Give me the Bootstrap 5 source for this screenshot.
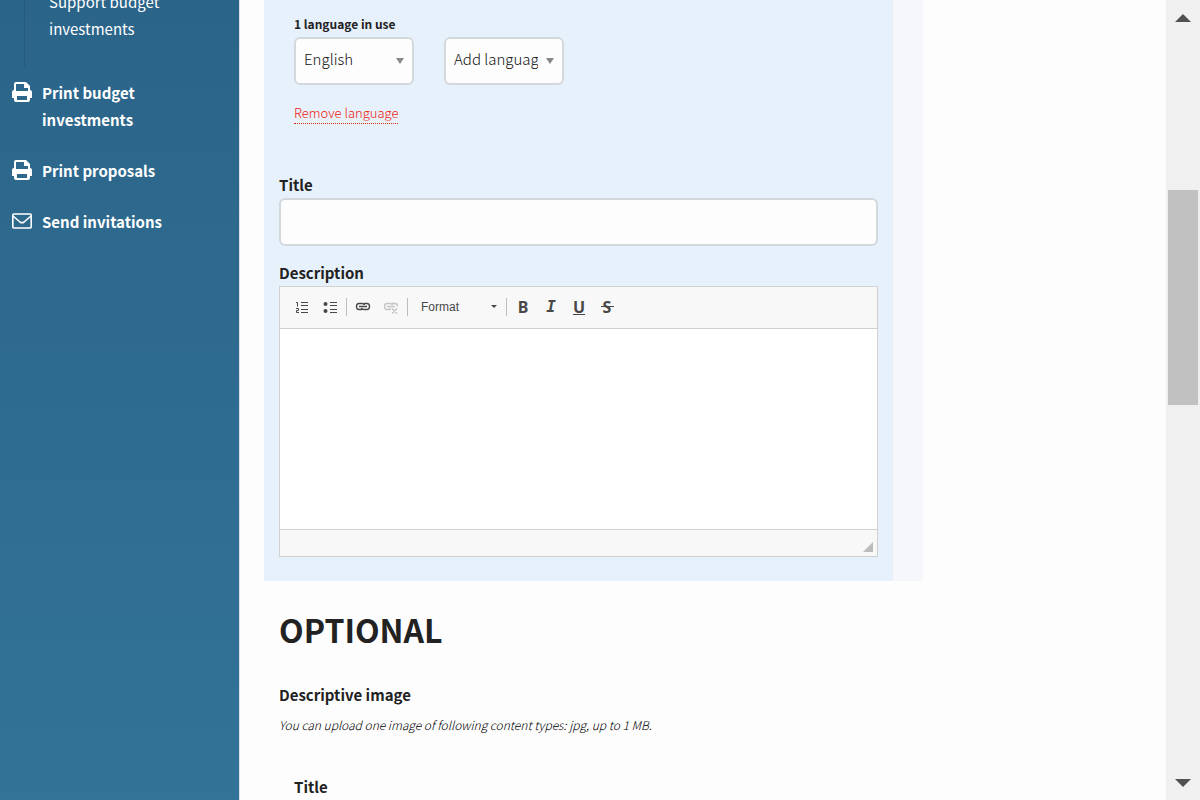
<!DOCTYPE html>
<html lang="en">
<head>
<meta charset="utf-8">
<meta name="viewport" content="width=device-width, initial-scale=1">
<title>New budget investment</title>
<link href="https://cdn.jsdelivr.net/npm/bootstrap@5.3.0/dist/css/bootstrap.min.css" rel="stylesheet">
<style>
body { font-family: "Source Sans Pro", "Noto Sans CJK SC", sans-serif; font-size: 15px; line-height: 24px; color: #222; background: #fdfdfd; }
.sidebar { flex: 0 0 240px; background: linear-gradient(#2b6489, #337398); border-right: 1px solid #dee0e3; line-height: 27px; }
.sidebar a { color: #fff; text-decoration: none; }
.sidebar nav { margin-top: -12px; }
.submenu { margin-left: 24px; padding: 0 60px 25px 24px; border-left: 1px solid #255a7c; }
.side-link { padding: 12px 60px 12px 12px; gap: 10px; font-weight: 700; }
.side-link svg { flex: none; margin-top: 3px; }
.content { padding: 0 24px; }
.translations { background: #f5f7fb; padding-right: 30px; }
.fields { background: #e7f1fc; padding: 12px 15px 24px; }
.languages { padding: 0 15px; height: 161px; }
.languages label { font-size: 12px; font-weight: 700; }
.lang-row { gap: 30px; margin-top: 1px; }
.lang-select { width: 120px; }
.form-select.field, .form-control.field { height: 48px; border: 2px solid #d3d8dc; border-radius: 6px; background-color: #fdfdfd; color: #111; font-size: 15px; line-height: 24px; font-weight: 300; padding: 8px; box-shadow: none; }
.form-select.field { padding: 6px 24px 10px 8px; background-image: url("data:image/svg+xml,%3Csvg xmlns='http://www.w3.org/2000/svg' viewBox='0 0 8 6'%3E%3Cpath d='M0 0h8L4 6z' fill='%23888'/%3E%3C/svg%3E"); background-size: 8px 6px; background-position: right 8px center; text-overflow: clip; }
.remove { font-size: 13px; line-height: 20px; font-weight: 300; color: #ee2010; text-decoration: none; border-bottom: 1px dotted #d03010; margin-top: 18px; }
.heading-label { font-weight: 700; display: block; }
.fields .heading-label { margin-bottom: 1px; }
.description-label { margin-top: 15px; }
.editor { border: 1px solid #d1d1d1; background: #fff; }
.tools { background: #f8f8f8; border-bottom: 1px solid #d1d1d1; height: 42px; padding: 0 0 2px 8px; }
.tools button { border: 0; background: none; color: #484848; padding: 0; width: 28px; height: 28px; display: flex; align-items: center; justify-content: center; font: 700 16px/16px "Noto Sans", sans-serif; }
.tools .divider { width: 1px; height: 18px; background: #bcbcbc; margin: 0 2px; }
.tools .format { width: 92px; font: 12px/16px "Liberation Sans", sans-serif; justify-content: space-between; padding: 0 5px 0 11px; margin-right: 2px; }
.tools .oblique { font-family: "DejaVu Sans Mono", monospace; font-style: italic; }
.tools .strike { padding: 0 2px; text-align: center; background: linear-gradient(#484848, #484848) center / 13px 1px no-repeat; }
.editor textarea { border: 0; outline: 0; resize: none; height: 200px; }
.editor-foot { border-top: 1px solid #d1d1d1; background: #f8f8f8; height: 27px; padding: 4px; }
.optional { padding-left: 15px; }
.optional h2 { font-size: 32px; line-height: 48px; font-weight: 700; margin: 24px 0 30px; }
.hint { font-size: 12px; line-height: 20px; font-style: italic; font-weight: 300; color: #000; margin: 8px 0 40px; }
.image-fields { padding-left: 15px; }
.image-fields .heading-label { margin-bottom: 1px; }
.scroll-track { flex: 0 0 34px; background: #f0f0f0; }
.scroll-track button { border: 0; background: none; padding: 0; height: 34px; flex: none; display: flex; align-items: center; justify-content: center; }
.scroll-track .scroll-up { padding-top: 2px; }
.thumb { flex: 215 0 0; background: #c1c1c1; margin: 0 2px; }
.above { flex: 156 0 0; }
.below { flex: 361 0 0; }
</style>
</head>
<body>
<div class="d-flex vh-100 overflow-hidden">
  <aside class="sidebar">
    <nav>
      <div class="submenu"><a href="#">Support budget investments</a></div>
      <a href="#" class="side-link d-flex">
        <svg width="20" height="20" viewBox="0 0 20 20" fill="#fff"><path fill-rule="evenodd" d="M2 8V2Q2 0 4 0h10l4 4v4q2 0 2 2v6h-2v2q0 2-2 2H4q-2 0-2-2v-2H0v-6q0-2 2-2zM4 2v7h12V6h-4V2zM5 14v4h10v-4z"/></svg>
        <span>Print budget investments</span></a>
      <a href="#" class="side-link d-flex">
        <svg width="20" height="20" viewBox="0 0 20 20" fill="#fff"><path fill-rule="evenodd" d="M2 8V2Q2 0 4 0h10l4 4v4q2 0 2 2v6h-2v2q0 2-2 2H4q-2 0-2-2v-2H0v-6q0-2 2-2zM4 2v7h12V6h-4V2zM5 14v4h10v-4z"/></svg>
        <span>Print proposals</span></a>
      <a href="#" class="side-link d-flex">
        <svg width="20" height="20" viewBox="0 0 20 20" fill="none" stroke="#fff" stroke-width="1.6"><rect x=".8" y="3" width="18.4" height="14" rx="1"/><path d="M1 5l7 6q2 1.500 4 0l7-6"/></svg>
        <span>Send invitations</span></a>
    </nav>
  </aside>
  <main class="content flex-grow-1 overflow-hidden">
    <div class="row g-0"><div class="col-9">
      <section class="translations"><div class="fields">
        <div class="languages">
          <label for="lang" class="d-block">1 language in use</label>
          <div class="lang-row d-flex">
            <select id="lang" class="form-select field lang-select"><option>English</option></select>
            <select class="form-select field lang-select" aria-label="Add language"><option>Add language</option></select>
          </div>
          <a href="#" class="remove d-inline-block">Remove language</a>
        </div>
        <label for="title" class="heading-label">Title</label>
        <input id="title" type="text" class="form-control field">
        <label for="description" class="heading-label description-label">Description</label>
        <div class="editor">
          <div class="tools d-flex align-items-center">
            <button type="button" aria-label="Numbered list"><svg width="16" height="16" viewBox="0 0 16 16" fill="none" stroke="#484848"><path d="M7 3.500h7M7 6.500h7M7 10.500h7M7 13.500h7"/><path d="M2 3.500h1.500v4M2 9.500h2.500v2h-2v2H5"/></svg></button>
            <button type="button" aria-label="Bulleted list"><svg width="16" height="16" viewBox="0 0 16 16" fill="#484848"><circle cx="3.500" cy="5" r="2"/><circle cx="3.500" cy="12" r="2"/><path d="M8 3h7v1H8zM8 6h7v1H8zM8 10h7v1H8zM8 13h7v1H8z"/></svg></button>
            <span class="divider"></span>
            <button type="button" aria-label="Link"><svg width="16" height="16" viewBox="0 0 16 16" fill="none" stroke="#484848" stroke-width="1.400"><path d="M7 10.500H4Q1.500 10.500 1.500 7.500T4 4.500h3Q9 4.500 9.500 6M9 4.500h3q2.500 0 2.500 3t-2.500 3H9Q7 10.500 6.500 9M4 7.500h8"/></svg></button>
            <button type="button" aria-label="Unlink" disabled><svg width="16" height="16" viewBox="0 0 16 16" fill="none" stroke="#c4c4c4" stroke-width="1.400"><path d="M7 10.500H4Q1.500 10.500 1.500 7.500T4 4.500h3Q9 4.500 9.500 6M9 4.500h3q2.500 0 2.500 3M4 7.500h8M9 9.500l5 5M14 9.500l-5 5M6.500 9l1 1.500"/></svg></button>
            <span class="divider"></span>
            <button type="button" class="format">Format <svg width="6" height="3" viewBox="0 0 6 3"><path d="M0 0h6L3 3z" fill="#484848"/></svg></button>
            <span class="divider"></span>
            <button type="button">B</button>
            <button type="button" class="oblique">I</button>
            <button type="button" class="text-decoration-underline">U</button>
            <button type="button" class="strike">S</button>
          </div>
          <textarea id="description" class="d-block w-100"></textarea>
          <div class="editor-foot d-flex justify-content-end align-items-end"><svg width="10" height="10" viewBox="0 0 10 10"><path d="M10 0v10H0z" fill="#bcbcbc"/></svg></div>
        </div>
      </div></section>
      <section class="optional">
        <h2>OPTIONAL</h2>
        <div class="heading-label">Descriptive image</div>
        <p class="hint">You can upload one image of following content types: jpg, up to 1 MB.</p>
        <div class="image-fields">
          <label for="image-title" class="heading-label">Title</label>
          <input id="image-title" type="text" class="form-control field">
        </div>
      </section>
    </div></div>
  </main>
  <div class="scroll-track d-flex flex-column">
    <button type="button" class="scroll-up" aria-label="Scroll up"><svg width="16" height="8" viewBox="0 0 16 8"><path d="M8 0l8 8H0z" fill="#505050"/></svg></button>
    <div class="above"></div><div class="thumb"></div><div class="below"></div>
    <button type="button" aria-label="Scroll down"><svg width="16" height="8" viewBox="0 0 16 8"><path d="M0 0h16L8 8z" fill="#505050"/></svg></button>
  </div>
</div>
<script src="https://cdn.jsdelivr.net/npm/bootstrap@5.3.0/dist/js/bootstrap.bundle.min.js"></script>
</body>
</html>
